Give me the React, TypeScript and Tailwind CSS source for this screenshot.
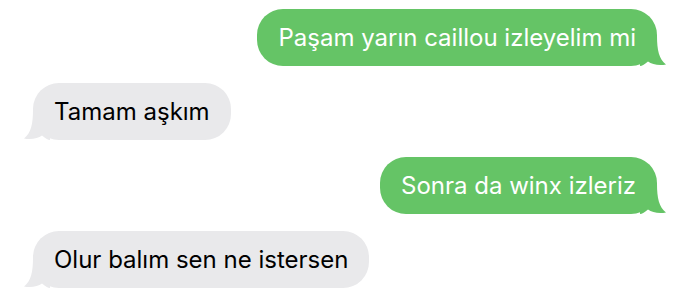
import React from "react"

type Msg = { text: string; mine: boolean }

const messages: Msg[] = [
    { text: "Paşam yarın caillou izleyelim mi", mine: true },
    { text: "Tamam aşkım", mine: false },
    { text: "Sonra da winx izleriz", mine: true },
    { text: "Olur balım sen ne istersen", mine: false },
]

const Tail = ({ mine }: { mine: boolean }) => (
    <svg
        width="26"
        height="30"
        viewBox="0 0 26 30"
        className={mine ? "absolute -right-[9px] bottom-0" : "absolute -left-[9px] bottom-0 -scale-x-100"}
    >
        <path
            d="M0 0 H17 C17 14 19 23 26 28.5 C19 30 12 28.5 8 25.5 C5 28 2 30 0 30 Z"
            fill={mine ? "#65c466" : "#e9e9eb"}
        />
    </svg>
)

const Bubble = ({ text, mine }: Msg) => (
    <div className={mine ? "flex justify-end" : "flex justify-start"}>
        <div
            className={
                mine
                    ? "relative rounded-[26px] bg-[#65c466] px-[21px] h-[57px] flex items-center text-white"
                    : "relative rounded-[26px] bg-[#e9e9eb] px-[21px] h-[57px] flex items-center text-black"
            }
        >
            <Tail mine={mine} />
            <span className="relative text-[24px] leading-none">{text}</span>
        </div>
    </div>
)

export default function App() {
    return (
        <div className="w-[690px] h-[303px] bg-white overflow-hidden px-[33px] pt-[9px] flex flex-col gap-[17px]" style={{ fontFamily: "Inter, 'Liberation Sans', sans-serif" }}>
            {messages.map((m, i) => (
                <Bubble key={i} text={m.text} mine={m.mine} />
            ))}
        </div>
    )
}
